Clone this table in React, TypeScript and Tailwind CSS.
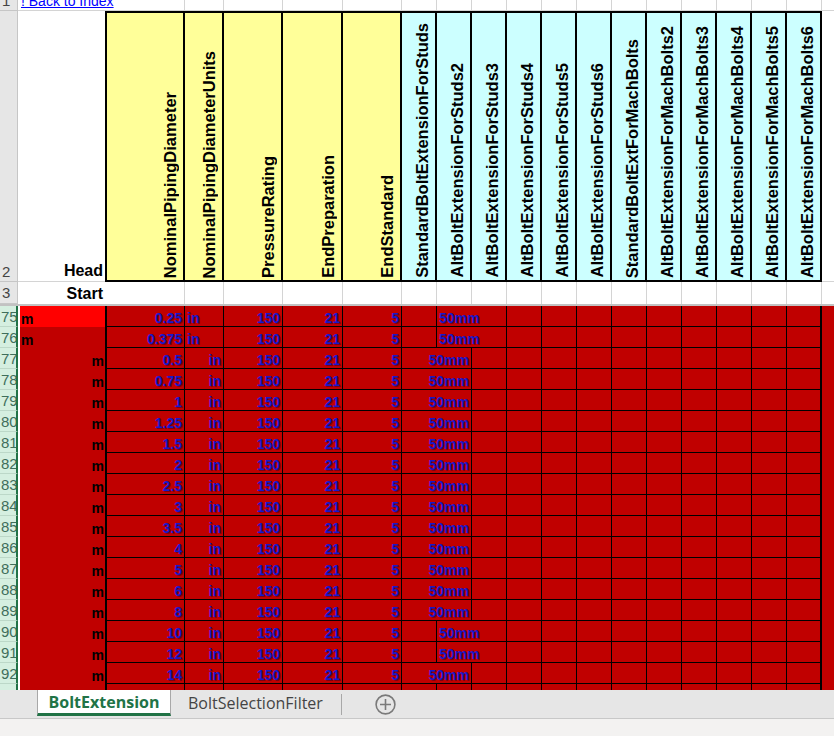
import React from "react";

type DataRow = {
  n: number;
  dia: string;
  unitLeft?: boolean;
  aLeft?: boolean;
  bright?: boolean;
  mm: "l" | "r";
};

const dataRows: DataRow[] = [
  { n: 75, dia: "0.25", unitLeft: true, aLeft: true, bright: true, mm: "l" },
  { n: 76, dia: "0.375", unitLeft: true, aLeft: true, mm: "l" },
  { n: 77, dia: "0.5", mm: "r" },
  { n: 78, dia: "0.75", mm: "r" },
  { n: 79, dia: "1", mm: "r" },
  { n: 80, dia: "1.25", mm: "r" },
  { n: 81, dia: "1.5", mm: "r" },
  { n: 82, dia: "2", mm: "r" },
  { n: 83, dia: "2.5", mm: "r" },
  { n: 84, dia: "3", mm: "r" },
  { n: 85, dia: "3.5", mm: "r" },
  { n: 86, dia: "4", mm: "r" },
  { n: 87, dia: "5", mm: "r" },
  { n: 88, dia: "6", mm: "r" },
  { n: 89, dia: "8", mm: "r" },
  { n: 90, dia: "10", mm: "l" },
  { n: 91, dia: "12", mm: "l" },
  { n: 92, dia: "14", mm: "r" },
];

const yellowHeads = [
  { label: "NominalPipingDiameter", w: "w-[80px] border-l-2" },
  { label: "NominalPipingDiameterUnits", w: "w-[39px]" },
  { label: "PressureRating", w: "w-[59px]" },
  { label: "EndPreparation", w: "w-[60px]" },
  { label: "EndStandard", w: "w-[59px]" },
];

const cyanHeads = [
  "StandardBoltExtensionForStuds",
  "AltBoltExtensionForStuds2",
  "AltBoltExtensionForStuds3",
  "AltBoltExtensionForStuds4",
  "AltBoltExtensionForStuds5",
  "AltBoltExtensionForStuds6",
  "StandardBoltExtForMachBolts",
  "AltBoltExtensionForMachBolts2",
  "AltBoltExtensionForMachBolts3",
  "AltBoltExtensionForMachBolts4",
  "AltBoltExtensionForMachBolts5",
  "AltBoltExtensionForMachBolts6",
];

// widths of the grey-grid columns (C..R) for rows 1 and 3
const plainCols = [
  "w-[39px]",
  "w-[59px]",
  "w-[60px]",
  "w-[59px]",
  ...Array(12).fill("w-[35px]"),
];

function GreyNum({ n, className }: { n: number; className?: string }) {
  return (
    <div
      className={`w-[18px] shrink-0 bg-[#e6e6e6] border-r border-b border-[#c6c6c6] text-[15px] leading-[17px] text-[#444] pl-[2px] flex overflow-hidden ${className || ""}`}
    >
      {n}
    </div>
  );
}

function VertHead({ label, w, bg }: { label: string; w: string; bg: string }) {
  return (
    <div
      className={`${w} ${bg} shrink-0 h-full border-y-2 border-r-2 border-black flex items-end justify-end pr-[3px] pb-[2px] overflow-hidden`}
    >
      <span className="[writing-mode:vertical-rl] rotate-180 whitespace-nowrap text-[16.5px] leading-[19px] font-bold text-black">
        {label}
      </span>
    </div>
  );
}

function Cell({
  w,
  children,
  left,
  last,
}: {
  w: string;
  children?: React.ReactNode;
  left?: boolean;
  last?: boolean;
}) {
  return (
    <div
      className={`${w} shrink-0 h-full bg-[#c00000] border-b border-black ${
        last ? "border-r-2" : "border-r"
      } flex items-end overflow-visible whitespace-nowrap leading-[16px] ${
        left ? "justify-start pl-[2px]" : "justify-end pr-[2px]"
      }`}
    >
      {children}
    </div>
  );
}

function DataLine({ r }: { r: DataRow }) {
  const empties = r.mm === "r" ? 10 : 9;
  return (
    <div className="flex h-[21px] text-[14px] font-bold text-[#1818cc] [text-shadow:1px_1px_0_rgba(40,0,40,0.45)]">
      <div className="w-[18px] shrink-0 bg-[#d5efe0] border-r-2 border-r-[#217346] border-b border-b-[#bcd8c8] text-[15px] leading-[17px] font-normal text-[#3f6e5b] [text-shadow:none] flex items-center overflow-hidden pl-[1px]">
        {r.n}
      </div>
      <div
        className={`w-[87px] shrink-0 border-l-2 border-white ${
          r.bright ? "bg-[#ff0000]" : "bg-[#c00000]"
        } flex items-end leading-[16px] text-black [text-shadow:none] ${
          r.aLeft ? "justify-start pl-[1px]" : "justify-end pr-[1px]"
        }`}
      >
        m
      </div>
      <div className="w-[80px] shrink-0 h-full bg-[#c00000] border-l-2 border-r border-b border-black flex items-end justify-end pr-[2px] leading-[16px]">
        {r.dia}
      </div>
      <Cell w="w-[39px]" left={r.unitLeft}>
        in
      </Cell>
      <Cell w="w-[59px]">150</Cell>
      <Cell w="w-[60px]">21</Cell>
      <Cell w="w-[59px]">5</Cell>
      {r.mm === "r" ? (
        <Cell w="w-[70px]">50mm</Cell>
      ) : (
        <>
          <Cell w="w-[35px]" />
          <Cell w="w-[70px]" left>
            50mm
          </Cell>
        </>
      )}
      {Array.from({ length: empties }).map((_, i) => (
        <Cell key={i} w="w-[35px]" last={i === empties - 1} />
      ))}
      <div className="w-[12px] shrink-0 bg-[#c00000]" />
    </div>
  );
}

function PartialLine() {
  return (
    <div className="flex h-[6px]">
      <div className="w-[18px] shrink-0 bg-[#d5efe0] border-r-2 border-r-[#217346]" />
      <div className="w-[87px] shrink-0 border-l-2 border-white bg-[#c00000]" />
      <div className="w-[80px] shrink-0 bg-[#c00000] border-l-2 border-r border-black" />
      {["w-[39px]", "w-[59px]", "w-[60px]", "w-[59px]", ...Array(12).fill("w-[35px]")].map(
        (w, i) => (
          <div
            key={i}
            className={`${w} shrink-0 bg-[#c00000] border-black ${i === 15 ? "border-r-2" : "border-r"}`}
          />
        )
      )}
      <div className="w-[12px] shrink-0 bg-[#c00000]" />
    </div>
  );
}

export default function App() {
  return (
    <div className="w-[834px] h-[736px] overflow-hidden bg-white flex flex-col font-['Liberation_Sans',Arial,sans-serif]">
      <div className="h-[690px] shrink-0 overflow-hidden">
        {/* row 1 */}
        <div className="flex h-[11px]">
          <GreyNum n={1} className="items-end pb-[1px]" />
          <div className="w-[167px] shrink-0 border-r border-b border-[#d4d4d4] flex items-end pl-[3px] pb-[1px] whitespace-nowrap">
            <span className="text-[14px] leading-[16px] text-[#0000ff] underline">
              ! Back to Index
            </span>
          </div>
          {plainCols.map((w, i) => (
            <div key={i} className={`${w} shrink-0 border-r border-b border-[#d4d4d4]`} />
          ))}
          <div className="w-[12px] shrink-0 border-b border-[#d4d4d4]" />
        </div>

        {/* row 2 - header */}
        <div className="flex h-[271px]">
          <GreyNum n={2} className="items-end pb-[1px]" />
          <div className="w-[87px] shrink-0 border-b border-[#d4d4d4] flex items-end justify-end pr-[2px] pb-[1px]">
            <span className="text-[16px] leading-[18px] font-bold">Head</span>
          </div>
          {yellowHeads.map((h) => (
            <VertHead key={h.label} label={h.label} w={h.w} bg="bg-[#ffff99]" />
          ))}
          {cyanHeads.map((h) => (
            <VertHead key={h} label={h} w="w-[35px]" bg="bg-[#ccffff]" />
          ))}
          <div className="w-[12px] shrink-0 border-b border-[#d4d4d4]" />
        </div>

        {/* row 3 */}
        <div className="flex h-[22px]">
          <GreyNum n={3} className="items-center" />
          <div className="w-[87px] shrink-0 flex items-end justify-end pr-[2px] pb-[1px]">
            <span className="text-[16px] leading-[18px] font-bold">Start</span>
          </div>
          <div className="w-[80px] shrink-0 border-r border-[#d4d4d4]" />
          {plainCols.map((w, i) => (
            <div key={i} className={`${w} shrink-0 border-r border-[#d4d4d4]`} />
          ))}
          <div className="w-[12px] shrink-0" />
        </div>

        {/* frozen pane line */}
        <div className="h-[2px] bg-[#c2c2c2]" />

        {dataRows.map((r) => (
          <DataLine key={r.n} r={r} />
        ))}
        <PartialLine />
      </div>

      {/* sheet tabs */}
      <div className="h-[29px] shrink-0 bg-[#e6e6e6] border-b border-[#c8c8c8] flex items-start font-['Open_Sans',sans-serif]">
        <div className="w-[37px] shrink-0" />
        <div className="h-[26px] w-[134px] shrink-0 bg-white border-x border-[#a8a8a8] border-b-[3px] border-b-[#217346] flex justify-center items-center text-[16px] font-bold text-[#217346]">
          BoltExtension
        </div>
        <div className="h-[26px] w-[170px] shrink-0 flex items-center pl-[17px] text-[16px] text-[#444]">
          BoltSelectionFilter
        </div>
        <div className="mt-[4px] h-[21px] w-px bg-[#a8a8a8]" />
        <div className="ml-[33px] mt-[4px]">
          <svg width="21" height="21" viewBox="0 0 21 21" fill="none" stroke="#7a7a7a" strokeWidth="1.6">
            <circle cx="10.5" cy="10.5" r="9.4" />
            <path d="M10.5 5v11M5 10.5h11" />
          </svg>
        </div>
      </div>
      <div className="flex-1 bg-[#f3f2f1]" />
    </div>
  );
}
